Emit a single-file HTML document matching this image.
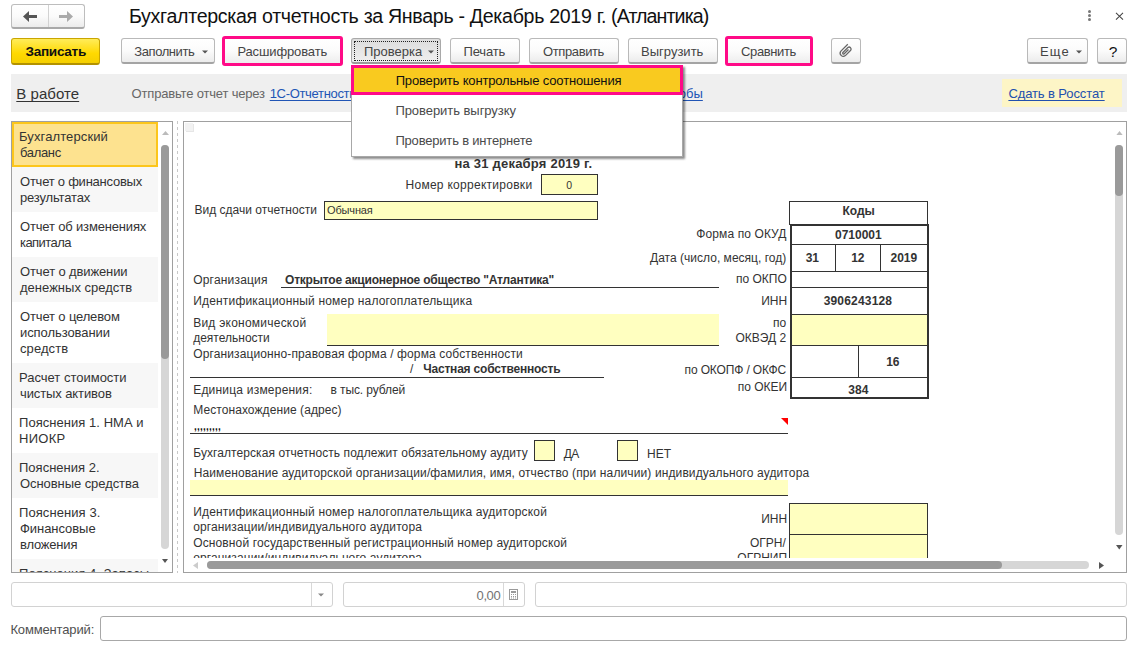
<!DOCTYPE html>
<html><head><meta charset="utf-8"><style>
html,body{margin:0;padding:0;width:1136px;height:648px;overflow:hidden;background:#fff;}
body{position:relative;font-family:"Liberation Sans",sans-serif;}
.t{position:absolute;white-space:nowrap;}
.r{position:absolute;}
u{text-decoration:underline;}
</style></head><body>
<div class="r" style="left:11px;top:4px;width:74px;height:25px;box-sizing:border-box;border:1px solid #b9b9b9;border-bottom:2px solid #a4a4a4;border-radius:3px;background:linear-gradient(#ffffff 0%,#fbfbfb 50%,#ececec 100%);border-color:#bdbdbd;border-bottom:2px solid #a9a9a9;"></div>
<div class="r" style="left:48px;top:5px;width:1px;height:22px;background:#d2d2d2;"></div>
<svg class="r" style="left:22px;top:10px" width="16" height="14" viewBox="0 0 16 14"><path d="M1 6.5 L7 1 L7 5 L15 5 L15 8 L7 8 L7 12 Z" fill="#555"/></svg>
<svg class="r" style="left:58px;top:10px" width="16" height="14" viewBox="0 0 16 14"><path d="M15 6.5 L9 1 L9 5 L1 5 L1 8 L9 8 L9 12 Z" fill="#aaa"/></svg>
<div class="t" style="left:129.00px;top:6.91px;font-size:19.6px;line-height:19.6px;color:#111;letter-spacing:-0.310px;">Бухгалтерская отчетность за Январь - Декабрь 2019 г.</div>
<div class="t" style="left:611.00px;top:6.91px;font-size:19.6px;line-height:19.6px;color:#111;letter-spacing:-0.888px;">(Атлантика)</div>
<div class="r" style="left:1087.9px;top:10.0px;width:3px;height:3px;border-radius:50%;background:#777"></div>
<div class="r" style="left:1087.9px;top:14.0px;width:3px;height:3px;border-radius:50%;background:#777"></div>
<div class="r" style="left:1087.9px;top:18.0px;width:3px;height:3px;border-radius:50%;background:#777"></div>
<svg class="r" style="left:1114px;top:11px" width="11" height="10" viewBox="0 0 11 10"><path d="M2 1.8 L9 8.6 M9 1.8 L2 8.6" stroke="#444" stroke-width="1.05"/></svg>
<div class="r" style="left:11px;top:38px;width:89px;height:27px;box-sizing:border-box;border:1px solid #c9a500;border-bottom:2px solid #b39200;border-radius:3px;background:linear-gradient(#ffec5a,#ffd900 60%,#f5cf00);"></div>
<div class="t" style="left:25.50px;top:44.59px;font-size:13.6px;line-height:13.6px;color:#111;font-weight:bold;letter-spacing:-0.312px;">Записать</div>
<div class="r" style="left:121px;top:38px;width:94px;height:26px;box-sizing:border-box;border:1px solid #b9b9b9;border-bottom:2px solid #a4a4a4;border-radius:3px;background:linear-gradient(#ffffff 0%,#fbfbfb 50%,#ececec 100%);"></div>
<div class="t" style="left:134.30px;top:44.60px;font-size:13px;line-height:13px;color:#444;letter-spacing:-0.418px;">Заполнить</div>
<svg class="r" style="left:202px;top:50px" width="6" height="4" viewBox="0 0 6 4"><path d="M0 0.5 L6 0.5 L3 3.5 Z" fill="#555"/></svg>
<div class="r" style="left:222px;top:36px;width:121px;height:30px;box-sizing:border-box;border:3px solid #ff0a87;border-radius:3px;"></div>
<div class="r" style="left:225px;top:39px;width:115px;height:24px;background:linear-gradient(#ffffff 0%,#fbfbfb 50%,#ededed 100%);"></div>
<div class="t" style="left:237.40px;top:44.60px;font-size:13px;line-height:13px;color:#444;letter-spacing:-0.125px;">Расшифровать</div>
<div class="r" style="left:351px;top:38px;width:90px;height:26px;box-sizing:border-box;border:1px solid #a9a9a9;border-bottom:2px solid #9a9a9a;border-radius:3px;background:linear-gradient(#dcdcdc,#e8e8e8 60%,#efefef);"></div>
<div class="t" style="left:364.00px;top:44.60px;font-size:13px;line-height:13px;color:#444;">Проверка</div>
<svg class="r" style="left:428px;top:50px" width="6" height="4" viewBox="0 0 6 4"><path d="M0 0.5 L6 0.5 L3 3.5 Z" fill="#555"/></svg>
<div class="r" style="left:354px;top:41px;width:84px;height:20px;box-sizing:border-box;border:1px dotted #222;"></div>
<div class="r" style="left:450px;top:38px;width:70px;height:26px;box-sizing:border-box;border:1px solid #b9b9b9;border-bottom:2px solid #a4a4a4;border-radius:3px;background:linear-gradient(#ffffff 0%,#fbfbfb 50%,#ececec 100%);"></div>
<div class="t" style="left:463.60px;top:44.60px;font-size:13px;line-height:13px;color:#444;letter-spacing:-0.183px;">Печать</div>
<div class="r" style="left:529px;top:38px;width:90px;height:26px;box-sizing:border-box;border:1px solid #b9b9b9;border-bottom:2px solid #a4a4a4;border-radius:3px;background:linear-gradient(#ffffff 0%,#fbfbfb 50%,#ececec 100%);"></div>
<div class="t" style="left:543.00px;top:44.60px;font-size:13px;line-height:13px;color:#444;letter-spacing:-0.386px;">Отправить</div>
<div class="r" style="left:628px;top:38px;width:90px;height:26px;box-sizing:border-box;border:1px solid #b9b9b9;border-bottom:2px solid #a4a4a4;border-radius:3px;background:linear-gradient(#ffffff 0%,#fbfbfb 50%,#ececec 100%);"></div>
<div class="t" style="left:641.00px;top:44.60px;font-size:13px;line-height:13px;color:#444;letter-spacing:0.010px;">Выгрузить</div>
<div class="r" style="left:725px;top:36px;width:88px;height:30px;box-sizing:border-box;border:3px solid #ff0a87;border-radius:3px;"></div>
<div class="r" style="left:728px;top:39px;width:82px;height:24px;background:linear-gradient(#ffffff 0%,#fbfbfb 50%,#ededed 100%);"></div>
<div class="t" style="left:741.00px;top:44.60px;font-size:13px;line-height:13px;color:#444;letter-spacing:-0.364px;">Сравнить</div>
<div class="r" style="left:831px;top:38px;width:30px;height:26px;box-sizing:border-box;border:1px solid #b9b9b9;border-bottom:2px solid #a4a4a4;border-radius:3px;background:linear-gradient(#ffffff 0%,#fbfbfb 50%,#ececec 100%);"></div>
<svg class="r" style="left:834px;top:40px" width="24" height="22" viewBox="0 0 24 22"><path d="M13.8 4.2 L6.9 11.1 A3.2 3.2 0 0 0 11.4 15.6 L16.7 10.3 A2 2 0 0 0 13.9 7.5 L8.9 12.5 A0.9 0.9 0 0 0 10.2 13.8 L14.5 9.5" fill="none" stroke="#666" stroke-width="1.25"/></svg>
<div class="r" style="left:1027px;top:38px;width:61px;height:26px;box-sizing:border-box;border:1px solid #b9b9b9;border-bottom:2px solid #a4a4a4;border-radius:3px;background:linear-gradient(#ffffff 0%,#fbfbfb 50%,#ececec 100%);"></div>
<div class="t" style="left:1040.00px;top:44.60px;font-size:13px;line-height:13px;color:#444;letter-spacing:1.190px;">Еще</div>
<svg class="r" style="left:1075.5px;top:50px" width="6" height="4" viewBox="0 0 6 4"><path d="M0 0.5 L6 0.5 L3 3.5 Z" fill="#555"/></svg>
<div class="r" style="left:1097px;top:38px;width:30px;height:26px;box-sizing:border-box;border:1px solid #b9b9b9;border-bottom:2px solid #a4a4a4;border-radius:3px;background:linear-gradient(#ffffff 0%,#fbfbfb 50%,#ececec 100%);"></div>
<div class="t" style="left:1108.80px;top:43.78px;font-size:15.5px;line-height:15.5px;color:#111;">?</div>
<div class="r" style="left:11px;top:74px;width:1116px;height:38px;background:#efefef;"></div>
<div class="t" style="left:16.30px;top:85.80px;font-size:15px;line-height:15px;color:#333;letter-spacing:0.048px;text-decoration:underline;text-decoration-skip-ink:none;text-underline-offset:2.4px;">В работе</div>
<div class="t" style="left:131.60px;top:86.80px;font-size:13px;line-height:13px;color:#666;letter-spacing:-0.180px;">Отправьте отчет через</div>
<div class="t" style="left:269.70px;top:86.80px;font-size:13px;line-height:13px;color:#2155b5;letter-spacing:-0.325px;text-decoration:underline;text-decoration-skip-ink:none;text-underline-offset:2px;">1С-Отчетность</div>
<div class="t" style="left:651.41px;top:86.80px;font-size:13px;line-height:13px;color:#2155b5;text-decoration:underline;text-decoration-skip-ink:none;text-underline-offset:2px;">способы</div>
<div class="r" style="left:1002px;top:79px;width:120px;height:28px;background:#fdf5c6;"></div>
<div class="t" style="left:1008.40px;top:86.80px;font-size:13px;line-height:13px;color:#2150ae;letter-spacing:-0.104px;text-decoration:underline;text-decoration-skip-ink:none;text-underline-offset:2px;">Сдать в Росстат</div>
<div class="r" style="left:11px;top:121px;width:162px;height:452px;box-sizing:border-box;border:1px solid #a0a0a0;background:#fff;"></div>
<div class="r" style="left:12px;top:122px;width:146px;height:450px;overflow:hidden">
<div class="r" style="left:0;top:0px;width:146px;height:45px;box-sizing:border-box;border:2px solid #fcc61c;background:#fde28f"></div>
<div class="t" style="left:7.00px;top:8.40px;font-size:13px;line-height:13px;color:#333;letter-spacing:0.114px;">Бухгалтерский</div>
<div class="t" style="left:8.00px;top:24.40px;font-size:13px;line-height:13px;color:#333;letter-spacing:-0.334px;">баланс</div>
<div class="r" style="left:0;top:45px;width:146px;height:45px;background:#f7f7f7"></div>
<div class="t" style="left:8.00px;top:53.40px;font-size:13px;line-height:13px;color:#333;letter-spacing:-0.236px;">Отчет о финансовых</div>
<div class="t" style="left:8.00px;top:69.40px;font-size:13px;line-height:13px;color:#333;letter-spacing:-0.154px;">результатах</div>
<div class="t" style="left:8.00px;top:98.40px;font-size:13px;line-height:13px;color:#333;letter-spacing:-0.165px;">Отчет об изменениях</div>
<div class="t" style="left:8.00px;top:114.40px;font-size:13px;line-height:13px;color:#333;letter-spacing:-0.561px;">капитала</div>
<div class="r" style="left:0;top:135px;width:146px;height:45px;background:#f7f7f7"></div>
<div class="t" style="left:8.00px;top:143.40px;font-size:13px;line-height:13px;color:#333;letter-spacing:-0.124px;">Отчет о движении</div>
<div class="t" style="left:8.00px;top:159.40px;font-size:13px;line-height:13px;color:#333;letter-spacing:0.012px;">денежных средств</div>
<div class="t" style="left:8.00px;top:188.40px;font-size:13px;line-height:13px;color:#333;letter-spacing:-0.146px;">Отчет о целевом</div>
<div class="t" style="left:8.00px;top:204.40px;font-size:13px;line-height:13px;color:#333;letter-spacing:-0.073px;">использовании</div>
<div class="t" style="left:8.00px;top:220.40px;font-size:13px;line-height:13px;color:#333;letter-spacing:0.081px;">средств</div>
<div class="r" style="left:0;top:241px;width:146px;height:45px;background:#f7f7f7"></div>
<div class="t" style="left:7.00px;top:249.40px;font-size:13px;line-height:13px;color:#333;letter-spacing:-0.005px;">Расчет стоимости</div>
<div class="t" style="left:8.00px;top:265.40px;font-size:13px;line-height:13px;color:#333;letter-spacing:-0.101px;">чистых активов</div>
<div class="t" style="left:7.00px;top:294.40px;font-size:13px;line-height:13px;color:#333;letter-spacing:0.043px;">Пояснения 1. НМА и</div>
<div class="t" style="left:7.00px;top:310.40px;font-size:13px;line-height:13px;color:#333;letter-spacing:0.271px;">НИОКР</div>
<div class="r" style="left:0;top:331px;width:146px;height:45px;background:#f7f7f7"></div>
<div class="t" style="left:7.00px;top:339.40px;font-size:13px;line-height:13px;color:#333;letter-spacing:0.014px;">Пояснения 2.</div>
<div class="t" style="left:8.00px;top:355.40px;font-size:13px;line-height:13px;color:#333;letter-spacing:-0.067px;">Основные средства</div>
<div class="t" style="left:7.00px;top:384.40px;font-size:13px;line-height:13px;color:#333;letter-spacing:0.078px;">Пояснения 3.</div>
<div class="t" style="left:8.00px;top:400.40px;font-size:13px;line-height:13px;color:#333;letter-spacing:-0.051px;">Финансовые</div>
<div class="t" style="left:8.00px;top:416.40px;font-size:13px;line-height:13px;color:#333;letter-spacing:-0.199px;">вложения</div>
<div class="r" style="left:0;top:437px;width:146px;height:29px;background:#f7f7f7"></div>
<div class="t" style="left:7.00px;top:445.40px;font-size:13px;line-height:13px;color:#333;letter-spacing:0.043px;">Пояснения 4. Запасы</div>
</div>
<svg class="r" style="left:162px;top:131px" width="7" height="4" viewBox="0 0 7 4"><path d="M0 4 L3.5 0 L7 4 Z" fill="#bbb"/></svg>
<div class="r" style="left:161px;top:145px;width:8px;height:404px;background:#d6d6d6;border-radius:4px;"></div>
<div class="r" style="left:161px;top:145px;width:8px;height:214px;background:#9a9a9a;border-radius:4px;"></div>
<svg class="r" style="left:162px;top:559px" width="6" height="4" viewBox="0 0 6 4"><path d="M0 0 L3 4 L6 0 Z" fill="#555"/></svg>
<div class="r" style="left:177px;top:121px;width:1px;height:452px;background:repeating-linear-gradient(#c8c8c8 0 3px, transparent 3px 6px);"></div>
<div class="r" style="left:183px;top:121px;width:944px;height:452px;box-sizing:border-box;border:1px solid #a0a0a0;background:#fff;"></div>
<div class="r" style="left:185px;top:123px;width:8px;height:8px;background:#f2f2f2;box-shadow:1px 1px 0 #e6e6e6;"></div>
<div class="r" style="left:184px;top:122px;width:927px;height:436px;overflow:hidden">
<div class="t" style="left:270.50px;top:34.80px;font-size:13px;line-height:13px;color:#333;font-weight:bold;letter-spacing:0.214px;">на 31 декабря 2019 г.</div>
<div class="t" style="left:221.50px;top:56.54px;font-size:12px;line-height:12px;color:#333;letter-spacing:0.277px;">Номер корректировки</div>
<div class="r" style="left:357px;top:52px;width:57px;height:21px;box-sizing:border-box;border:1px solid #333;background:#ffffc0;"></div>
<div class="t" style="left:382.30px;top:57.71px;font-size:10.5px;line-height:10.5px;color:#333;">0</div>
<div class="t" style="left:10.50px;top:82.34px;font-size:12px;line-height:12px;color:#333;letter-spacing:0.012px;">Вид сдачи отчетности</div>
<div class="r" style="left:140px;top:79px;width:274px;height:19px;box-sizing:border-box;border:1px solid #333;background:#ffffc0;"></div>
<div class="t" style="left:143.10px;top:82.99px;font-size:11px;line-height:11px;color:#333;letter-spacing:-0.164px;">Обычная</div>
<div class="r" style="left:605px;top:79px;width:139px;height:24px;box-sizing:border-box;border:1px solid #333;"></div>
<div class="t" style="left:658.44px;top:83.34px;font-size:12px;line-height:12px;color:#333;font-weight:bold;">Коды</div>
<div class="r" style="left:606px;top:102px;width:139px;height:175px;box-sizing:border-box;border:2px solid #333;"></div>
<div class="r" style="left:608px;top:192px;width:135px;height:31px;background:#ffffc0;"></div>
<div class="r" style="left:607px;top:122px;width:137px;height:1px;background:#333;"></div>
<div class="r" style="left:607px;top:149px;width:137px;height:1px;background:#333;"></div>
<div class="r" style="left:607px;top:165px;width:137px;height:1px;background:#333;"></div>
<div class="r" style="left:607px;top:192px;width:137px;height:1px;background:#333;"></div>
<div class="r" style="left:607px;top:223px;width:137px;height:1px;background:#333;"></div>
<div class="r" style="left:607px;top:255px;width:137px;height:1px;background:#333;"></div>
<div class="r" style="left:651px;top:122px;width:1px;height:27px;background:#333;"></div>
<div class="r" style="left:696px;top:122px;width:1px;height:27px;background:#333;"></div>
<div class="r" style="left:674px;top:223px;width:1px;height:32px;background:#333;"></div>
<div class="t" style="left:650.98px;top:107.14px;font-size:12px;line-height:12px;color:#333;font-weight:bold;">0710001</div>
<div class="t" style="left:621.66px;top:129.84px;font-size:12px;line-height:12px;color:#333;font-weight:bold;">31</div>
<div class="t" style="left:667.16px;top:129.84px;font-size:12px;line-height:12px;color:#333;font-weight:bold;">12</div>
<div class="t" style="left:706.49px;top:129.84px;font-size:12px;line-height:12px;color:#333;font-weight:bold;">2019</div>
<div class="t" style="left:639.65px;top:172.84px;font-size:12px;line-height:12px;color:#333;font-weight:bold;letter-spacing:0.182px;">3906243128</div>
<div class="t" style="left:702.16px;top:233.84px;font-size:12px;line-height:12px;color:#333;font-weight:bold;">16</div>
<div class="t" style="left:664.33px;top:261.84px;font-size:12px;line-height:12px;color:#333;font-weight:bold;">384</div>
<div class="t" style="left:512.30px;top:106.34px;font-size:12px;line-height:12px;color:#333;letter-spacing:0.102px;">Форма по ОКУД</div>
<div class="t" style="left:466.00px;top:129.54px;font-size:12px;line-height:12px;color:#333;letter-spacing:0.021px;">Дата (число, месяц, год)</div>
<div class="t" style="left:552.04px;top:151.34px;font-size:12px;line-height:12px;color:#333;">по ОКПО</div>
<div class="t" style="left:577.21px;top:172.64px;font-size:12px;line-height:12px;color:#333;">ИНН</div>
<div class="t" style="left:589.00px;top:194.84px;font-size:12px;line-height:12px;color:#333;">по</div>
<div class="t" style="left:551.48px;top:209.74px;font-size:12px;line-height:12px;color:#333;">ОКВЭД 2</div>
<div class="t" style="left:500.60px;top:241.54px;font-size:12px;line-height:12px;color:#333;letter-spacing:-0.144px;">по ОКОПФ / ОКФС</div>
<div class="t" style="left:553.67px;top:259.34px;font-size:12px;line-height:12px;color:#333;">по ОКЕИ</div>
<div class="t" style="left:9.20px;top:151.64px;font-size:12px;line-height:12px;color:#333;letter-spacing:0.192px;">Организация</div>
<div class="t" style="left:101.00px;top:151.64px;font-size:12px;line-height:12px;color:#333;font-weight:bold;letter-spacing:-0.202px;">Открытое акционерное общество "Атлантика"</div>
<div class="r" style="left:97px;top:165px;width:438px;height:1px;background:#333;"></div>
<div class="t" style="left:9.20px;top:172.74px;font-size:12px;line-height:12px;color:#333;letter-spacing:0.178px;">Идентификационный номер налогоплательщика</div>
<div class="t" style="left:9.20px;top:195.14px;font-size:12px;line-height:12px;color:#333;letter-spacing:0.234px;">Вид экономической</div>
<div class="t" style="left:9.20px;top:209.74px;font-size:12px;line-height:12px;color:#333;">деятельности</div>
<div class="r" style="left:143px;top:192px;width:392px;height:31px;background:#ffffc0;"></div>
<div class="r" style="left:143px;top:223px;width:392px;height:1px;background:#333;"></div>
<div class="t" style="left:9.20px;top:225.54px;font-size:12px;line-height:12px;color:#333;letter-spacing:0.118px;">Организационно-правовая форма / форма собственности</div>
<div class="t" style="left:226.10px;top:240.84px;font-size:12px;line-height:12px;color:#333;">/</div>
<div class="t" style="left:239.20px;top:240.84px;font-size:12px;line-height:12px;color:#333;font-weight:bold;letter-spacing:-0.192px;">Частная собственность</div>
<div class="r" style="left:6px;top:255px;width:414px;height:1px;background:#333;"></div>
<div class="t" style="left:9.20px;top:261.84px;font-size:12px;line-height:12px;color:#333;letter-spacing:0.210px;">Единица измерения:</div>
<div class="t" style="left:146.50px;top:261.84px;font-size:12px;line-height:12px;color:#333;letter-spacing:-0.098px;">в тыс. рублей</div>
<div class="t" style="left:9.20px;top:281.64px;font-size:12px;line-height:12px;color:#333;letter-spacing:0.082px;">Местонахождение (адрес)</div>
<div class="t" style="left:9.90px;top:300.14px;font-size:10px;line-height:10px;color:#111;font-weight:bold;letter-spacing:0.222px;">,,,,,,,,,</div>
<div class="r" style="left:6px;top:311px;width:598px;height:1px;background:#333;"></div>
<svg class="r" style="left:597px;top:296px" width="7" height="7" viewBox="0 0 7 7"><path d="M0 0 L7 0 L7 7 Z" fill="#f00"/></svg>
<div class="t" style="left:9.20px;top:325.34px;font-size:12px;line-height:12px;color:#333;letter-spacing:0.077px;">Бухгалтерская отчетность подлежит обязательному аудиту</div>
<div class="r" style="left:350px;top:318px;width:21px;height:21px;box-sizing:border-box;border:1px solid #333;background:#ffffc0;"></div>
<div class="t" style="left:379.70px;top:325.64px;font-size:12px;line-height:12px;color:#333;letter-spacing:-0.627px;">ДА</div>
<div class="r" style="left:433px;top:318px;width:21px;height:21px;box-sizing:border-box;border:1px solid #333;background:#ffffc0;"></div>
<div class="t" style="left:463.00px;top:325.64px;font-size:12px;line-height:12px;color:#333;">НЕТ</div>
<div class="t" style="left:9.70px;top:344.64px;font-size:12px;line-height:12px;color:#333;letter-spacing:0.115px;">Наименование аудиторской организации/фамилия, имя, отчество (при наличии) индивидуального аудитора</div>
<div class="r" style="left:6px;top:358px;width:598px;height:16px;background:#ffffc0;"></div>
<div class="r" style="left:6px;top:373px;width:598px;height:1px;background:#333;"></div>
<div class="t" style="left:9.20px;top:383.84px;font-size:12px;line-height:12px;color:#333;letter-spacing:0.179px;">Идентификационный номер налогоплательщика аудиторской</div>
<div class="t" style="left:9.20px;top:399.34px;font-size:12px;line-height:12px;color:#333;letter-spacing:0.110px;">организации/индивидуального аудитора</div>
<div class="t" style="left:9.20px;top:415.34px;font-size:12px;line-height:12px;color:#333;letter-spacing:0.130px;">Основной государственный регистрационный номер аудиторской</div>
<div class="t" style="left:9.20px;top:430.34px;font-size:12px;line-height:12px;color:#333;letter-spacing:0.110px;">организации/индивидуального аудитора</div>
<div class="t" style="left:577.21px;top:390.64px;font-size:12px;line-height:12px;color:#333;">ИНН</div>
<div class="t" style="left:566.00px;top:415.34px;font-size:12px;line-height:12px;color:#333;">ОГРН/</div>
<div class="t" style="left:553.37px;top:430.34px;font-size:12px;line-height:12px;color:#333;">ОГРНИП</div>
<div class="r" style="left:605px;top:381px;width:139px;height:32px;box-sizing:border-box;border:1px solid #333;background:#ffffc0;"></div>
<div class="r" style="left:605px;top:412px;width:139px;height:66px;box-sizing:border-box;border:1px solid #333;background:#ffffc0;"></div>
</div>
<svg class="r" style="left:1115.5px;top:130.5px" width="7" height="4.5" viewBox="0 0 7 4.5"><path d="M0 4.5 L3.5 0 L7 4.5 Z" fill="#bbb"/></svg>
<div class="r" style="left:1115px;top:145px;width:8px;height:390px;background:#d6d6d6;border-radius:4px;"></div>
<div class="r" style="left:1115px;top:145px;width:8px;height:51px;background:#9a9a9a;border-radius:4px;"></div>
<svg class="r" style="left:1116px;top:545px" width="6.5" height="4.5" viewBox="0 0 6.5 4.5"><path d="M0 0 L3.25 4.5 L6.5 0 Z" fill="#555"/></svg>
<svg class="r" style="left:193px;top:562px" width="5" height="7" viewBox="0 0 5 7"><path d="M5 0 L0 3.5 L5 7 Z" fill="#ccc"/></svg>
<div class="r" style="left:207px;top:561px;width:882px;height:8px;background:#d6d6d6;border-radius:4px;"></div>
<div class="r" style="left:207px;top:561px;width:795px;height:8px;background:#9a9a9a;border-radius:4px;"></div>
<svg class="r" style="left:1099px;top:562px" width="5" height="7" viewBox="0 0 5 7"><path d="M0 0 L5 3.5 L0 7 Z" fill="#555"/></svg>
<div class="r" style="left:11px;top:582px;width:322px;height:25px;box-sizing:border-box;border:1px solid #d2d2d2;border-radius:3px;background:#fff;"></div>
<div class="r" style="left:311px;top:583px;width:1px;height:23px;background:#d8d8d8;"></div>
<svg class="r" style="left:318px;top:593px" width="6" height="4" viewBox="0 0 6 4"><path d="M0 0.5 L6 0.5 L3 3.5 Z" fill="#888"/></svg>
<div class="r" style="left:343px;top:582px;width:182px;height:25px;box-sizing:border-box;border:1px solid #d2d2d2;border-radius:3px;background:#fff;"></div>
<div class="r" style="left:503px;top:583px;width:1px;height:23px;background:#d8d8d8;"></div>
<div class="t" style="left:476.60px;top:588.50px;font-size:13px;line-height:13px;color:#737373;letter-spacing:-0.424px;">0,00</div>
<svg class="r" style="left:509px;top:589px" width="9" height="11" viewBox="0 0 9 11"><rect x="0.5" y="0.5" width="8" height="10" fill="none" stroke="#9a9a9a"/><rect x="2" y="2" width="5" height="2" fill="#9a9a9a"/><g fill="#9a9a9a"><rect x="2" y="5" width="1" height="1"/><rect x="4" y="5" width="1" height="1"/><rect x="6" y="5" width="1" height="1"/><rect x="2" y="7" width="1" height="1"/><rect x="4" y="7" width="1" height="1"/><rect x="6" y="7" width="1" height="1"/><rect x="2" y="8.5" width="1" height="1"/><rect x="4" y="8.5" width="1" height="1"/><rect x="6" y="8.5" width="1" height="1"/></g></svg>
<div class="r" style="left:535px;top:582px;width:592px;height:25px;box-sizing:border-box;border:1px solid #d2d2d2;border-radius:3px;background:#fff;"></div>
<div class="t" style="left:10.40px;top:622.50px;font-size:13px;line-height:13px;color:#505050;letter-spacing:-0.143px;">Комментарий:</div>
<div class="r" style="left:100px;top:616px;width:1027px;height:25px;box-sizing:border-box;border:1px solid #a8a8a8;border-radius:3px;background:#fff;"></div>
<div class="r" style="left:351px;top:65px;width:332px;height:92px;box-sizing:border-box;border:1px solid #a8a8a8;background:#fff;box-shadow:2px 2px 2px rgba(0,0,0,0.45);"></div>
<div class="r" style="left:351px;top:65px;width:332px;height:30px;box-sizing:border-box;border:3px solid #ff0a87;background:#f9ca1f;"></div>
<div class="t" style="left:395.70px;top:73.50px;font-size:13px;line-height:13px;color:#111;letter-spacing:-0.163px;">Проверить контрольные соотношения</div>
<div class="t" style="left:395.40px;top:104.30px;font-size:13px;line-height:13px;color:#4a4a4a;letter-spacing:-0.053px;">Проверить выгрузку</div>
<div class="t" style="left:395.40px;top:134.00px;font-size:13px;line-height:13px;color:#4a4a4a;letter-spacing:-0.187px;">Проверить в интернете</div>
</body></html>
